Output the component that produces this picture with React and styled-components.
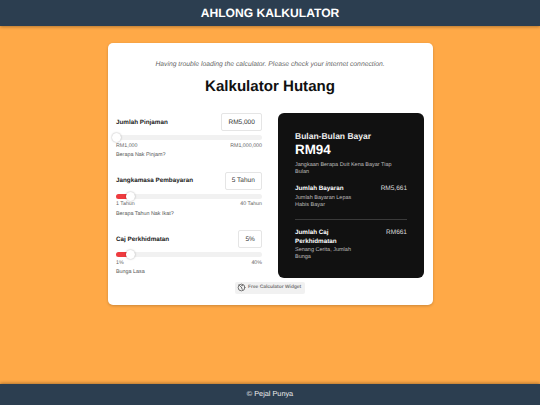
import React from "react";
import styled, { createGlobalStyle } from "styled-components";

const Global = createGlobalStyle`
  html, body { margin: 0; padding: 0; }
  body { font-family: "Liberation Sans", Arial, sans-serif; text-rendering: geometricPrecision; }
  * { box-sizing: border-box; }
`;

const Page = styled.div`
  width: 540px;
  height: 405px;
  display: flex;
  flex-direction: column;
  background: #ffa947;
  overflow: hidden;
`;
const Header = styled.header`
  height: 26px;
  flex: none;
  background: #2c3e50;
  box-shadow: 0 1px 3px rgba(0,0,0,.3);
  color: #fff;
  font-size: 12.1px;
  font-weight: 700;
  line-height: 26px;
  text-align: center;
`;
const Main = styled.main`
  flex: 1;
  display: flex;
  justify-content: center;
  align-items: flex-start;
  padding-top: 17px;
`;
const Card = styled.section`
  width: 325px;
  height: 262px;
  background: #fff;
  border-radius: 5px;
  box-shadow: 0 1px 3px rgba(0,0,0,.2);
  padding: 16.5px 8.5px 0;
`;
const Notice = styled.p`
  margin: 0;
  font-size: 6.77px;
  line-height: 9px;
  font-style: italic;
  color: #666;
  text-align: center;
`;
const Title = styled.h1`
  margin: 8px 0 0;
  font-size: 15.1px;
  line-height: 19px;
  font-weight: 700;
  color: #111;
  text-align: center;
`;
const Columns = styled.div`
  display: grid;
  grid-template-columns: 146px 146px;
  justify-content: space-between;
  margin-top: 17.5px;
`;
const Inputs = styled.div`
  display: flex;
  flex-direction: column;
  gap: 12.7px;
`;
const Field = styled.div`
  display: flex;
  flex-direction: column;
`;
const FieldHead = styled.div`
  height: 18px;
  display: flex;
  align-items: center;
  justify-content: space-between;
`;
const Label = styled.label`
  font-size: 6.3px;
  font-weight: 700;
  color: #222;
`;
const ValueBox = styled.div`
  height: 18px;
  padding: 0 6.2px;
  display: flex;
  align-items: center;
  border: 1px solid #e5e5e5;
  border-radius: 2px;
  font-size: 6.5px;
  color: #333;
`;
const Track = styled.div`
  position: relative;
  height: 5px;
  margin-top: 4px;
  border-radius: 3px;
  background: #f1f1f1;
`;
const Fill = styled.div`
  height: 100%;
  border-radius: 3px;
  background: #ee3b3f;
`;
const Thumb = styled.div`
  position: absolute;
  top: -2px;
  width: 9px;
  height: 9px;
  margin-left: -4.5px;
  border-radius: 50%;
  background: #fff;
  box-shadow: 0 0 2px rgba(0,0,0,.35);
`;
const Range = styled.div`
  display: flex;
  justify-content: space-between;
  margin-top: 2.5px;
  font-size: 5.3px;
  line-height: 7px;
  color: #666;
`;
const Hint = styled.div`
  margin-top: 2.5px;
  font-size: 5.4px;
  line-height: 7px;
  color: #555;
`;
const Results = styled.aside`
  height: 165px;
  padding: 18px 17px 0;
  background: #111;
  border-radius: 6px;
  color: #fff;
`;
const ResultTitle = styled.div`
  font-size: 8.5px;
  line-height: 11px;
  font-weight: 700;
  color: #eee;
`;
const Amount = styled.div`
  font-size: 13.4px;
  line-height: 16px;
  font-weight: 700;
`;
const Caption = styled.div`
  margin-top: ${p => p.$top}px;
  max-width: ${p => p.$max}px;
  font-size: 5.5px;
  line-height: 7px;
  color: #bdbdbd;
`;
const Row = styled.div`
  display: flex;
  justify-content: space-between;
  align-items: flex-start;
  margin-top: ${p => p.$top}px;
`;
const RowLabel = styled.div`
  max-width: 55px;
  font-size: 6.3px;
  line-height: 8.5px;
  font-weight: 700;
`;
const RowValue = styled.div`
  font-size: 6.5px;
  line-height: 8.5px;
  color: #ddd;
`;
const Divider = styled.hr`
  margin: 9.5px 0 0;
  border: 0;
  border-top: 1px solid #3a3a3a;
`;
const BadgeRow = styled.div`
  display: flex;
  justify-content: center;
  margin-top: 4px;
`;
const Badge = styled.div`
  height: 11.5px;
  width: 70px;
  padding: 0 2px;
  display: flex;
  align-items: center;
  gap: 2px;
  background: #f1f1f1;
  border-radius: 2px;
  font-size: 4.9px;
  font-weight: 700;
  white-space: nowrap;
  color: #777;
`;
const Footer = styled.footer`
  height: 21px;
  flex: none;
  background: #2c3e50;
  box-shadow: 0 -1px 3px rgba(0,0,0,.3);
  color: #ededed;
  font-size: 7.3px;
  line-height: 20px;
  text-align: center;
`;

const fields = [
  { label: "Jumlah Pinjaman", value: "RM5,000", pos: 0, min: "RM1,000", max: "RM1,000,000", hint: "Berapa Nak Pinjam?" },
  { label: "Jangkamasa Pembayaran", value: "5 Tahun", pos: 10, min: "1 Tahun", max: "40 Tahun", hint: "Berapa Tahun Nak Ikat?" },
  { label: "Caj Perkhidmatan", value: "5%", pos: 10, min: "1%", max: "40%", hint: "Bunga Lasa" },
];

function Widget() {
  return (
    <svg width="9" height="9" viewBox="0 0 24 24" fill="none" stroke="#666" strokeWidth="2.4" strokeLinecap="round">
      <circle cx="12" cy="12" r="9" />
      <path d="M5 5l7 7" />
      <path d="M12 7h3M12 12l2 5" />
    </svg>
  );
}

export default function App() {
  return (
    <Page>
      <Global />
      <Header>AHLONG KALKULATOR</Header>
      <Main>
        <Card>
          <Notice>Having trouble loading the calculator. Please check your internet connection.</Notice>
          <Title>Kalkulator Hutang</Title>
          <Columns>
            <Inputs>
              {fields.map(f => (
                <Field key={f.label}>
                  <FieldHead>
                    <Label>{f.label}</Label>
                    <ValueBox>{f.value}</ValueBox>
                  </FieldHead>
                  <Track>
                    <Fill style={{ width: `${f.pos}%` }} />
                    <Thumb style={{ left: `${f.pos}%` }} />
                  </Track>
                  <Range><span>{f.min}</span><span>{f.max}</span></Range>
                  <Hint>{f.hint}</Hint>
                </Field>
              ))}
            </Inputs>
            <Results>
              <ResultTitle>Bulan-Bulan Bayar</ResultTitle>
              <Amount>RM94</Amount>
              <Caption $top={3.5} $max={112}>Jangkaan Berapa Duit Kena Bayar Tiap Bulan</Caption>
              <Row $top={9}>
                <RowLabel>Jumlah Bayaran</RowLabel>
                <RowValue>RM5,661</RowValue>
              </Row>
              <Caption $top={2} $max={60}>Jumlah Bayaran Lepas Habis Bayar</Caption>
              <Divider />
              <Row $top={9.5}>
                <RowLabel>Jumlah Caj Perkhidmatan</RowLabel>
                <RowValue>RM661</RowValue>
              </Row>
              <Caption $top={1} $max={60}>Senang Cerita, Jumlah Bunga</Caption>
            </Results>
          </Columns>
          <BadgeRow>
            <Badge><Widget />Free Calculator Widget</Badge>
          </BadgeRow>
        </Card>
      </Main>
      <Footer>© Pejal Punya</Footer>
    </Page>
  );
}
